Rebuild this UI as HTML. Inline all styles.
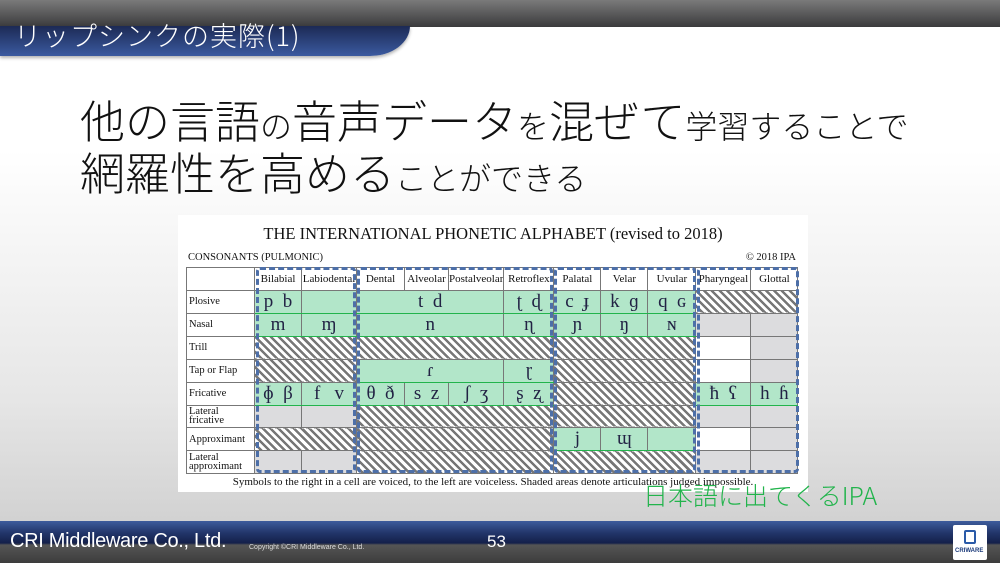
<!DOCTYPE html>
<html><head><meta charset="utf-8"><style>
*{margin:0;padding:0;box-sizing:border-box}
body{width:1000px;height:563px;overflow:hidden;position:relative;background:linear-gradient(#fff 0,#fff 150px,#e6e6e6 400px,#d2d2d2 520px);font-family:"Liberation Sans","Noto Sans CJK JP",sans-serif}
.hdr{position:absolute;left:0;top:0;width:1000px;height:27px;background:linear-gradient(#7a7a7a,#3a3a3c)}
.blue{position:absolute;left:0;top:26px;width:410px;height:30px;background:linear-gradient(#1c2a55,#3b5aa0);border-radius:0 0 40px 0 / 0 0 30px 0;box-shadow:0 2px 3px rgba(0,0,0,.3)}
.ttl{position:absolute;left:14px;top:15px;color:#fff;font-size:27px;font-family:"Noto Sans CJK JP",sans-serif;font-weight:300;letter-spacing:1px}
.h1{position:absolute;left:80px;font-family:"Noto Sans CJK JP",sans-serif;font-weight:300;color:#111;white-space:nowrap}
.b{font-size:45px}.s{font-size:32px}
.img{position:absolute;left:178px;top:215px;width:630px;height:277px;background:#fff;font-family:"Liberation Serif",serif;color:#111}
table{position:absolute;left:8px;top:52px;border-collapse:collapse;table-layout:fixed}
td{border:1px solid #777;height:22.8px;font-size:11px;padding:0;text-align:center;white-space:nowrap;overflow:hidden}
td.l{text-align:left;padding-left:2px;font-size:10.5px;line-height:9px}
td.g{background:#b2e6c9;border-top:1.5px solid #22b44c;border-bottom:1.5px solid #22b44c;font-size:19px;color:#224}
td.h{background:repeating-linear-gradient(45deg,#fff 0 3px,#777 3px 5.5px)}
td.y{background:#dcdcde}
td.w{background:#fff}
.ds{position:absolute;border:3.5px dashed #4d6fa8;border-radius:4px}
.ftr{position:absolute;left:0;top:521px;width:1000px;height:42px;background:linear-gradient(#3d5c9c 0,#22356a 12px,#14204a 22px,#555 24px,#3c3c3c 42px)}
</style></head><body>
<div class="hdr"></div><div class="blue"></div>
<div class="ttl">リップシンクの実際(1)</div>
<div class="h1" style="top:86px"><span class="b">他の言語</span><span class="s">の</span><span class="b">音声データ</span><span class="s">を</span><span class="b">混ぜて</span><span class="s">学習することで</span></div>
<div class="h1" style="top:138px"><span class="b">網羅性を高める</span><span class="s">ことができる</span></div>
<div class="img">
<div style="position:absolute;left:0;width:630px;top:9px;text-align:center;font-size:16.5px">THE INTERNATIONAL PHONETIC ALPHABET (revised to 2018)</div>
<div style="position:absolute;left:10px;top:37px;font-size:10.5px">CONSONANTS (PULMONIC)</div>
<div style="position:absolute;right:12px;top:37px;font-size:10.5px">© 2018 IPA</div>
<table>
<colgroup><col style="width:68px"><col style="width:47px"><col style="width:55px"><col style="width:48px"><col style="width:44px"><col style="width:55px"><col style="width:50px"><col style="width:47px"><col style="width:47px"><col style="width:48px"><col style="width:55px"><col style="width:47px"></colgroup>
<tr><td></td><td>Bilabial</td><td>Labiodental</td><td>Dental</td><td>Alveolar</td><td>Postalveolar</td><td>Retroflex</td><td>Palatal</td><td>Velar</td><td>Uvular</td><td>Pharyngeal</td><td>Glottal</td></tr>
<tr><td class="l">Plosive</td><td class="g">p&nbsp;&nbsp;b</td><td class="g"></td><td class="g" colspan="3">t&nbsp;&nbsp;d</td><td class="g">ʈ&nbsp;&nbsp;ɖ</td><td class="g">c&nbsp;&nbsp;ɟ</td><td class="g">k&nbsp;&nbsp;ɡ</td><td class="g">q&nbsp;&nbsp;ɢ</td><td class="h" colspan="2"></td></tr>
<tr><td class="l">Nasal</td><td class="g">m</td><td class="g">ɱ</td><td class="g" colspan="3">n</td><td class="g">ɳ</td><td class="g">ɲ</td><td class="g">ŋ</td><td class="g">ɴ</td><td class="y"></td><td class="y"></td></tr>
<tr><td class="l">Trill</td><td class="h" colspan="2"></td><td class="h" colspan="4"></td><td class="h" colspan="3"></td><td class="w"></td><td class="y"></td></tr>
<tr><td class="l">Tap or Flap</td><td class="h" colspan="2"></td><td class="g" colspan="3">ɾ</td><td class="g">ɽ</td><td class="h" colspan="3"></td><td class="w"></td><td class="y"></td></tr>
<tr><td class="l">Fricative</td><td class="g">ɸ&nbsp;&nbsp;β</td><td class="g">f&nbsp;&nbsp;&nbsp;v</td><td class="g">θ&nbsp;&nbsp;ð</td><td class="g">s&nbsp;&nbsp;z</td><td class="g">ʃ&nbsp;&nbsp;ʒ</td><td class="g">ʂ&nbsp;&nbsp;ʐ</td><td class="h" colspan="3"></td><td class="g">ħ&nbsp;&nbsp;ʕ</td><td class="g">h&nbsp;&nbsp;ɦ</td></tr>
<tr><td class="l">Lateral<br>fricative</td><td class="y"></td><td class="y"></td><td class="h" colspan="4"></td><td class="h" colspan="3"></td><td class="y"></td><td class="y"></td></tr>
<tr><td class="l">Approximant</td><td class="h" colspan="2"></td><td class="h" colspan="4"></td><td class="g">j</td><td class="g">ɰ</td><td class="g"></td><td class="w"></td><td class="y"></td></tr>
<tr><td class="l">Lateral<br>approximant</td><td class="y"></td><td class="y"></td><td class="h" colspan="4"></td><td class="h" colspan="3"></td><td class="y"></td><td class="y"></td></tr>
</table>
<div class="ds" style="left:78px;top:52px;width:100px;height:206px"></div>
<div class="ds" style="left:179px;top:52px;width:196px;height:206px"></div>
<div class="ds" style="left:376px;top:52px;width:142px;height:206px"></div>
<div class="ds" style="left:519px;top:52px;width:102px;height:206px"></div>
<div style="position:absolute;left:0;width:630px;top:261px;text-align:center;font-size:11px">Symbols to the right in a cell are voiced, to the left are voiceless. Shaded areas denote articulations judged impossible.</div>
</div>
<div style="position:absolute;left:643px;top:477px;font-size:25px;color:#22b44c;font-family:'Noto Sans CJK JP',sans-serif;font-weight:300">日本語に出てくるIPA</div>
<div class="ftr"></div>
<div style="position:absolute;left:10px;top:530px;color:#fff;font-size:20px;letter-spacing:-0.3px">CRI Middleware Co., Ltd.</div>
<div style="position:absolute;left:249px;top:544px;color:#ddd;font-size:7px">Copyright ©CRI Middleware Co., Ltd.</div>
<div style="position:absolute;left:487px;top:532px;color:#fff;font-size:17px">53</div>
<div style="position:absolute;left:953px;top:525px;width:34px;height:35px;background:#fff;border-radius:2px">
<div style="position:absolute;left:11px;top:5px;width:12px;height:14px;border:2px solid #2a5aa8;border-radius:2px"></div>
<div style="position:absolute;left:2px;top:23px;font-size:6px;color:#1b3a7a;font-weight:bold">CRIWARE</div></div>
</body></html>
